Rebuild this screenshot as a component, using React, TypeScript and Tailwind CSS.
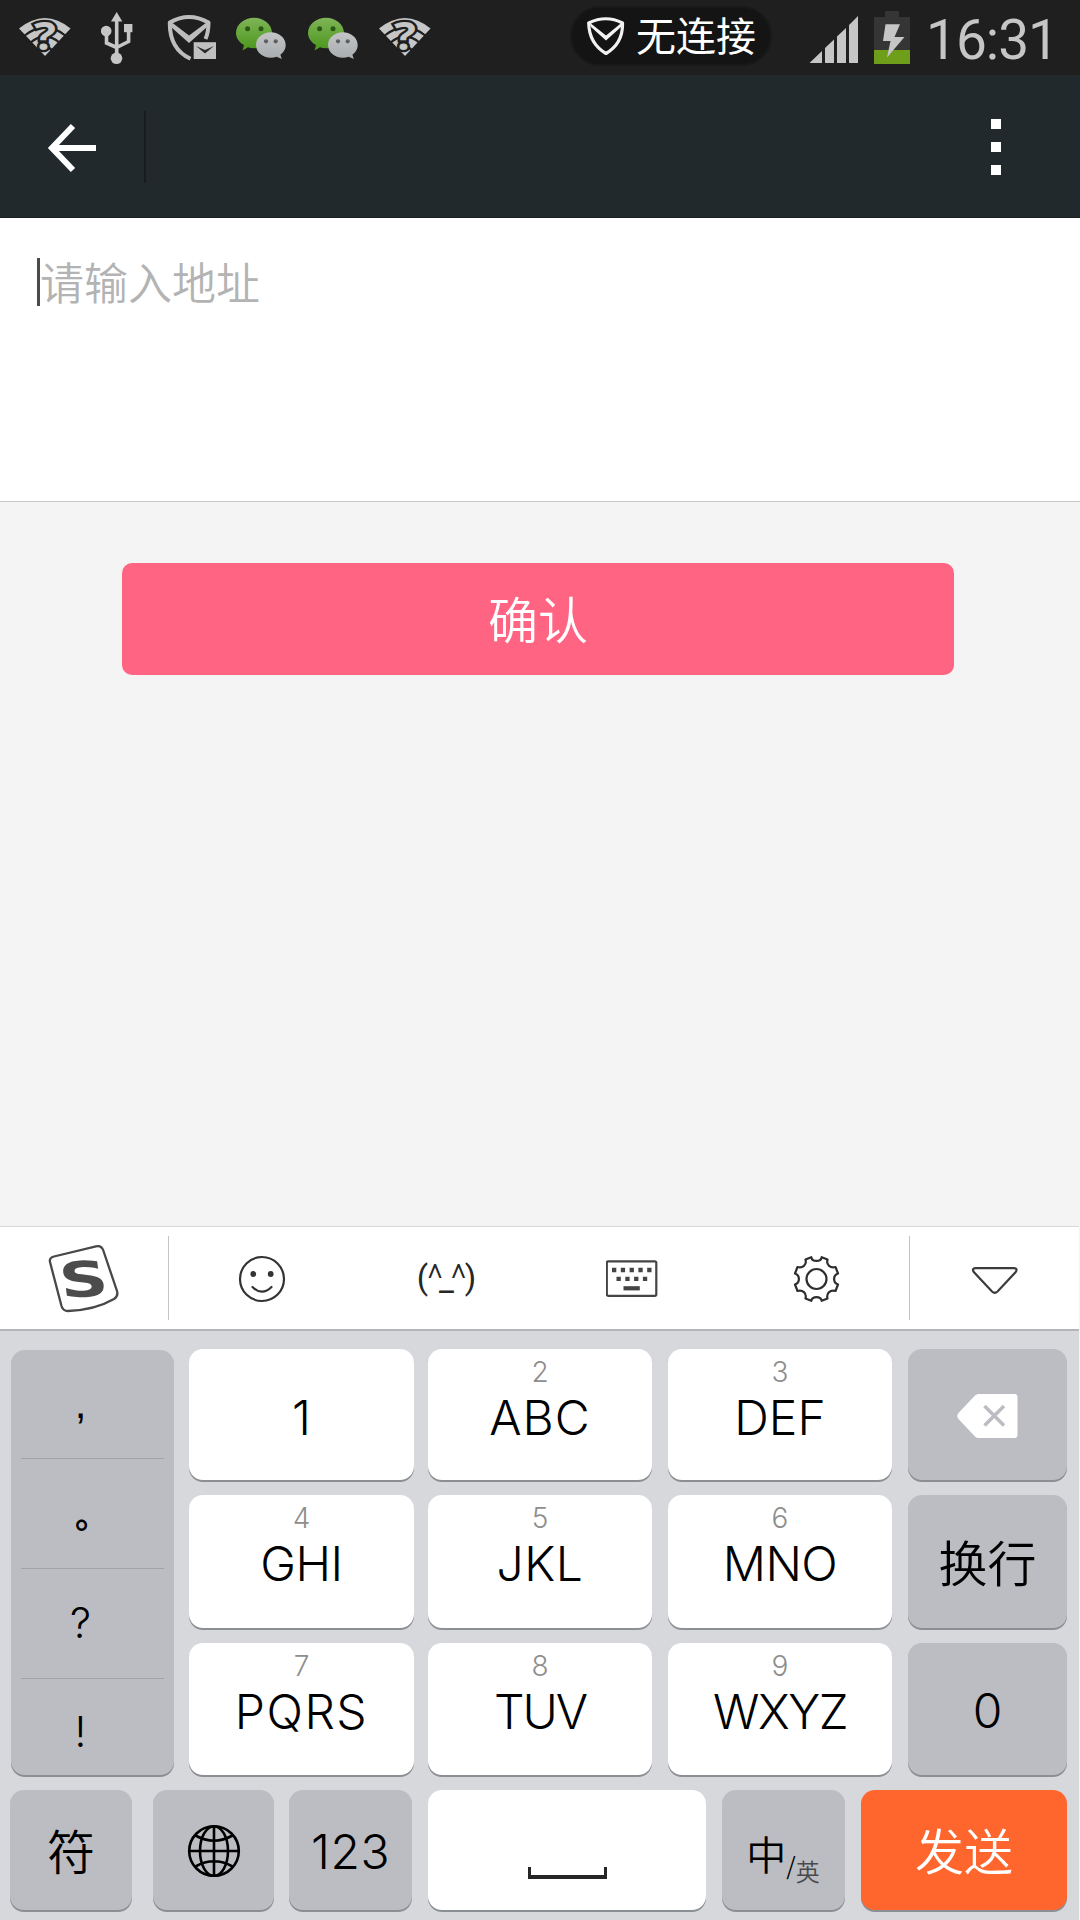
import type { ReactNode } from "react";

const CJK = "font-['Noto_Sans_CJK_SC',sans-serif]";
const CJK_DEMI = "font-['Noto_Sans_CJK_SC_DemiLight','Noto_Sans_CJK_SC',sans-serif] font-[350]";

function WifiUnknown() {
  return (
    <svg width="54" height="75" viewBox="18 0 54 75" className="shrink-0">
      <path d="M45 56 L19 28.5 Q45 7.5 70.5 28.5 Z" fill="#c6c6c6" />
      <g fill="none" stroke="#1f1f1f" strokeWidth="2.2">
        <path d="M24 36 Q45 19 66 36" />
        <path d="M30 43 Q45 30 60 43" />
        <path d="M37 51 Q45 43 53 51" />
      </g>
      <text
        transform="translate(45 50) scale(1.18 1)"
        textAnchor="middle"
        fontSize="39"
        className="font-['Open_Sans',sans-serif] font-bold"
        fill="#c6c6c6"
        stroke="#1f1f1f"
        strokeWidth="4.5"
        paintOrder="stroke"
      >
        ?
      </text>
    </svg>
  );
}

function Usb() {
  return (
    <svg width="32" height="54" viewBox="101 11 32 54" className="shrink-0">
      <g fill="#c6c6c6">
        <path d="M116.7 12 L122.3 21.5 H111 Z" />
        <circle cx="116.5" cy="58.3" r="5.8" />
        <circle cx="106.2" cy="31" r="5.3" />
        <rect x="124" y="24" width="8.4" height="8.2" />
      </g>
      <path
        d="M116.7 20 V55 M106.5 32 V43 L116.7 47.5 M128.6 31 V41.5 L116.7 47.5"
        fill="none"
        stroke="#c6c6c6"
        strokeWidth="3.6"
      />
    </svg>
  );
}

function ShieldMail() {
  return (
    <svg width="50" height="48" viewBox="167 14 50 48" className="shrink-0">
      <g fill="none" stroke="#bdbdbd" strokeLinejoin="round">
        <path strokeWidth="4" d="M190.5 58.8 C178 53 169.5 42 169.8 22.5 Q189 11.5 208.5 22.5 Q208.5 32 205.5 39" />
      </g>
      <path d="M170 21 L189 35.500 L208.500 21 L207 27 L189 43 L171 27 Z" fill="#bdbdbd" />
      <rect x="193.7" y="42.2" width="22.3" height="16.8" fill="#c0c0c0" />
      <path d="M196 46 L205 50 L214 46 L205 53.5 Z" fill="#2a2a2a" />
    </svg>
  );
}

function WeChat({ id }: { id: string }) {
  return (
    <svg width="52" height="44" viewBox="235 17 52 44" className="shrink-0">
      <defs>
        <linearGradient id={id + "g"} x1="0" y1="0" x2="0" y2="1">
          <stop offset="0" stopColor="#7fb558" />
          <stop offset="1" stopColor="#4b961c" />
        </linearGradient>
        <linearGradient id={id + "w"} x1="0" y1="0" x2="0" y2="1">
          <stop offset="0" stopColor="#c3c4c5" />
          <stop offset="1" stopColor="#a9adb0" />
        </linearGradient>
      </defs>
      <path
        d="M254 17.7 C264 17.7 272 24.6 272 33 C272 41.5 264 48.2 254 48.2 Q250.500 48.200 248 47.200 L242.600 50.500 L244 45 C239 42.200 236 38 236 33 C236 24.600 244 17.700 254 17.700 Z"
        fill={`url(#${id}g)`}
      />
      <path
        d="M270.800 32.300 C279 32.300 285.700 38 285.700 45 C285.700 49 283.700 52.400 280.400 54.700 L281.800 59 L276.700 56.800 Q274 57.800 270.800 57.800 C262.600 57.800 256 52 256 45 C256 38 262.600 32.300 270.800 32.300 Z"
        fill={`url(#${id}w)`}
      />
      <g fill="#2b5a14">
        <circle cx="247.600" cy="28.700" r="2.500" />
        <circle cx="261" cy="28.700" r="2.500" />
      </g>
      <g fill="#5c6064">
        <circle cx="266" cy="41.300" r="2.100" />
        <circle cx="275.700" cy="41.300" r="2.100" />
      </g>
    </svg>
  );
}

function StatusBar() {
  return (
    <div className="flex h-[75px] shrink-0 bg-[#1f1f1f]">
      <div className="flex items-start pl-[18px]">
        <WifiUnknown />
        <div className="mt-[11px] ml-[29px]"><Usb /></div>
        <div className="mt-[14px] ml-[34px]"><ShieldMail /></div>
        <div className="mt-[17px] ml-[18px]"><WeChat id="a" /></div>
        <div className="mt-[17px] ml-5"><WeChat id="b" /></div>
        <div className="ml-[19px]"><WifiUnknown /></div>
      </div>
      <div className="mt-[6px] ml-[138px] flex h-[60px] w-[202px] items-center rounded-full border-2 border-[#191919] bg-[#141414] pl-[14px]">
        <svg width="40" height="40" viewBox="586 14 40 40" className="shrink-0">
          <path
            d="M606 51.500 C595 45 589 36 588.700 21 Q606 12.500 622.500 21 C623 36 617 45 606 51.500 Z"
            fill="none"
            stroke="#f2f2f2"
            strokeWidth="3.200"
            strokeLinejoin="round"
          />
          <path d="M589 20 L606 33.500 L622.500 20 L621 25 L606 38.500 L591 25 Z" fill="#f2f2f2" />
        </svg>
        <span className={`${CJK} ml-[10px] -mt-[4px] text-[40px] leading-[40px] whitespace-nowrap text-white`}>无连接</span>
      </div>
      <svg width="50" height="48" viewBox="809 16 50 48" className="mt-4 ml-[37px] shrink-0">
        <path
          d="M809.500 63 L822 51 V63 Z M825 63 V48 L834 39.500 V63 Z M837 63 V36.500 L846 28 V63 Z M849 63 V25 L858 16 V63 Z"
          fill="#c6c6c6"
        />
      </svg>
      <svg width="36" height="54" viewBox="874 11 36 54" className="mt-[11px] ml-[15px] shrink-0">
        <path d="M885 11 H899 V17 H910 V50 H874 V17 H885 Z" fill="#353535" />
        <rect x="874" y="50" width="36" height="14" fill="#6f9f1a" />
        <path d="M885.500 24.300 H900 L894.500 37 H904.500 L887 57.500 L890.500 41 H883 Z" fill="#c6c6c6" />
      </svg>
      <span className="mt-[13px] ml-[16px] font-['Roboto',sans-serif] text-[55px] leading-[55px] tracking-[-1px] text-[#c6c6c6]">16:31</span>
    </div>
  );
}

function Header() {
  return (
    <div className="flex h-[143px] shrink-0 items-start border-b border-[#1b2022] bg-[#22292c]">
      <svg width="50" height="50" viewBox="47 123 50 50" className="mt-12 ml-[47px] shrink-0">
        <path d="M73 126 L52 148 L73 170 M53 148 H96" fill="none" stroke="#fff" strokeWidth="6" />
      </svg>
      <div className="mt-9 ml-[47px] h-[72px] w-[2px] bg-[#171c1e]" />
      <div className="mt-11 mr-[79px] ml-auto flex flex-col gap-[13px]">
        <div className="size-[10px] bg-white" />
        <div className="size-[10px] bg-white" />
        <div className="size-[10px] bg-white" />
      </div>
    </div>
  );
}

function Toolbar() {
  return (
    <div className="flex h-[103px] w-[1079px] shrink-0 items-center border-t border-[#d8d8d8] bg-white">
      <div className="flex w-[168px] justify-center pt-[2px]">
        <svg width="72" height="72" viewBox="48 1243 72 72">
          <path
            d="M54 1256.500 L96 1246.300 Q101.500 1245 103.300 1250.500 L117 1291 Q118.500 1296 114 1299 Q95 1310 68 1311 Q63 1311 61.500 1306 L50 1262 Q49 1257.800 54 1256.500 Z"
            fill="none"
            stroke="#484848"
            strokeWidth="2.300"
          />
          <text
            transform="translate(86 1296.500) skewY(-3) skewX(8) scale(1.360 1)"
            textAnchor="middle"
            fontSize="49"
            className="font-['DejaVu_Sans',sans-serif] font-bold"
            fill="#4c4c4c"
          >
            S
          </text>
        </svg>
      </div>
      <div className="h-[84px] w-px bg-[#c4c4c4]" />
      <div className="flex flex-1 items-center pt-[2px]">
        <div className="flex flex-1 justify-center">
          <svg width="48" height="48" viewBox="-24 -24 48 48">
            <circle r="22" fill="none" stroke="#333" strokeWidth="2.200" />
            <circle cx="-8.700" cy="-5" r="2.900" fill="#333" />
            <circle cx="8.700" cy="-5" r="2.900" fill="#333" />
            <path d="M-9.500 8 Q0 17.500 9.500 8" fill="none" stroke="#333" strokeWidth="2.200" strokeLinecap="round" />
          </svg>
        </div>
        <div className="flex flex-1 justify-center">
          <svg width="62" height="54" viewBox="416 1252 62 54">
            <text textAnchor="middle" className="font-['Roboto',sans-serif]" fill="#262626">
              <tspan x="422.500" y="1288.500" fontSize="33">(</tspan>
              <tspan x="435" y="1292" fontSize="39" className="font-light">^</tspan>
              <tspan x="446.500" y="1290.500" fontSize="33">_</tspan>
              <tspan x="458.500" y="1292" fontSize="39" className="font-light">^</tspan>
              <tspan x="470.500" y="1288.500" fontSize="33">)</tspan>
            </text>
          </svg>
        </div>
        <div className="flex flex-1 justify-center">
          <svg width="52" height="38" viewBox="605.500 1260 52 38">
            <rect x="606.300" y="1261.300" width="49.500" height="34.500" rx="1.500" fill="none" stroke="#444" strokeWidth="2.200" />
            <path
              d="M611.500 1270 H651 M616 1278.800 H647.500"
              stroke="#444"
              strokeWidth="4.300"
              strokeDasharray="4.300 4.500"
            />
            <rect x="623" y="1286.200" width="16.300" height="4.200" fill="#444" />
          </svg>
        </div>
        <div className="flex flex-1 justify-center">
          <svg width="48" height="48" viewBox="-23.500 -24 48 48">
            <circle r="10" fill="none" stroke="#2e2e2e" strokeWidth="2.200" />
            <path
              d="M-5.200 -21.800 C-4.200 -16.800 4.200 -16.800 5.200 -21.800 L11 -19.400 C9.500 -14 14 -10.500 19 -12 L21.500 -5.500 C16.300 -3.800 16.300 3.800 21.500 5.500 L19 12 C14 10.500 9.500 14 11 19.400 L5.200 21.800 C4.200 16.800 -4.200 16.800 -5.200 21.800 L-11 19.400 C-9.500 14 -14 10.500 -19 12 L-21.500 5.500 C-16.300 3.800 -16.300 -3.800 -21.500 -5.500 L-19 -12 C-14 -10.500 -9.500 -14 -11 -19.400 Z"
              fill="none"
              stroke="#2e2e2e"
              strokeWidth="2.200"
              strokeLinejoin="round"
            />
          </svg>
        </div>
      </div>
      <div className="h-[84px] w-px bg-[#c4c4c4]" />
      <div className="flex w-[169px] justify-center pt-[3px]">
        <svg width="50" height="32" viewBox="970 1264 50 32">
          <path
            d="M975.500 1268.200 H1014 Q1018 1268.500 1015.700 1272 L997.500 1291.500 Q994.800 1294 992 1291.500 L973.800 1272 Q971.500 1268.500 975.500 1268.200 Z"
            fill="none"
            stroke="#3c3c3c"
            strokeWidth="2.200"
          />
        </svg>
      </div>
    </div>
  );
}

const keyBase = "flex shrink-0 flex-col items-center rounded-[14px] shadow-[0_2px_0_#8b8e92]";
const latin = "font-['Inter',sans-serif] font-light";

function LetterKey({
  digit,
  label,
  className,
  tracking = "tracking-normal",
}: {
  digit: string;
  label: string;
  className: string;
  tracking?: string;
}) {
  return (
    <div className={`${keyBase} bg-white pt-[9px] ${className}`}>
      <span className={`${latin} h-7 text-[28px] leading-7 text-[#8e8e8e]`}>{digit}</span>
      <span className={`${latin} mt-[8px] text-[48px] leading-[48px] text-black ${tracking}`}>{label}</span>
    </div>
  );
}

function GreyKey({ className, children }: { className: string; children: ReactNode }) {
  return <div className={`${keyBase} justify-center bg-[#bcbdc2] ${className}`}>{children}</div>;
}

function Keypad() {
  return (
    <div className="flex w-[1079px] flex-1 flex-col border-t-2 border-[#b4b5b9] bg-[#d7d8dc]">
      <div className="mt-[18px] flex h-[426px] pl-[11px]">
        <div className={`${keyBase} mt-px w-[163px] bg-[#bcbdc2] px-[10px] ${latin} text-[42px] leading-[42px] text-black`}>
          <div className="flex h-[109px] w-full shrink-0 border-b border-[#a2a3a7] pt-[33px]">
            <span className="w-[119px] text-center font-['Liberation_Sans',sans-serif] font-normal">,</span>
          </div>
          <div className="flex h-[110px] w-full shrink-0 border-b border-[#a2a3a7] pt-[48px] pl-[54px]">
            <span className={`${CJK} h-[14px] text-[34px] leading-[14px] font-bold`}>。</span>
          </div>
          <div className="flex h-[110px] w-full shrink-0 border-b border-[#a2a3a7] pt-[33px]"><span className="w-[119px] text-center">?</span></div>
          <div className="flex w-full pt-[32px]"><span className="w-[119px] text-center">!</span></div>
        </div>
        <div className="ml-[15px] flex flex-col">
          <div className="flex">
            <LetterKey digit="" label="1" className="h-[131px] w-[225px]" />
            <LetterKey digit="2" label="ABC" className="ml-[14px] h-[131px] w-[224px]" tracking="tracking-[1px]" />
            <LetterKey digit="3" label="DEF" className="ml-4 h-[131px] w-[224px]" />
            <GreyKey className="ml-4 h-[131px] w-[159px]">
              <svg width="61" height="46" viewBox="957.500 1392 61 46">
                <path
                  d="M979 1394 H1015 Q1018 1394 1018 1397 V1435 Q1018 1438 1015 1438 H979 Q977 1438 975.500 1436.500 L959 1419 Q956.500 1416 959 1413 L975.500 1395.500 Q977 1394 979 1394 Z"
                  fill="#fff"
                />
                <path d="M985 1406 L1004.500 1425.500 M1004.500 1406 L985 1425.500" stroke="#bcbdc2" strokeWidth="3.500" />
              </svg>
            </GreyKey>
          </div>
          <div className="mt-[15px] flex">
            <LetterKey digit="4" label="GHI" className="h-[133px] w-[225px]" tracking="tracking-[-0.5px]" />
            <LetterKey digit="5" label="JKL" className="ml-[14px] h-[133px] w-[224px]" tracking="tracking-[0.5px]" />
            <LetterKey digit="6" label="MNO" className="ml-4 h-[133px] w-[224px]" tracking="tracking-[-0.5px]" />
            <GreyKey className="ml-4 h-[133px] w-[159px]">
              <span className={`${CJK_DEMI} -mt-[2px] text-[49px] leading-[49px]`}>换行</span>
            </GreyKey>
          </div>
          <div className="mt-[15px] flex">
            <LetterKey digit="7" label="PQRS" className="h-[132px] w-[225px]" tracking="tracking-[1.5px]" />
            <LetterKey digit="8" label="TUV" className="ml-[14px] h-[132px] w-[224px]" tracking="tracking-[-2px]" />
            <LetterKey digit="9" label="WXYZ" className="ml-4 h-[132px] w-[224px]" tracking="tracking-[-1.5px]" />
            <GreyKey className="ml-4 h-[132px] w-[159px]">
              <span className={`${latin} mt-[4px] text-[48px] leading-[48px]`}>0</span>
            </GreyKey>
          </div>
        </div>
      </div>
      <div className="mt-[15px] flex pl-[10px]">
        <GreyKey className="h-[120px] w-[122px]">
          <span className={`${CJK_DEMI} -mt-[3px] text-[48px] leading-[48px]`}>符</span>
        </GreyKey>
        <GreyKey className="ml-[21px] h-[120px] w-[121px]">
          <svg width="54" height="56" viewBox="-27 -29 54 56" fill="none" stroke="#000" strokeWidth="2.600">
            <circle r="24.800" />
            <ellipse rx="14" ry="24.800" />
            <path d="M0 -25 V25 M-25 0 H25 M-18.500 -15.500 Q0 -5 18.500 -15.500 M-18.500 15.500 Q0 5 18.500 15.500" />
          </svg>
        </GreyKey>
        <GreyKey className="ml-[15px] h-[120px] w-[123px]">
          <span className={`${latin} mt-[4px] text-[48px] leading-[48px] tracking-[0.5px]`}>123</span>
        </GreyKey>
        <div className={`${keyBase} ml-4 h-[120px] w-[278px] bg-white`}>
          <div className="mt-[77px] h-3 w-[79px] border-x-[3px] border-b-4 border-[#262626]" />
        </div>
        <GreyKey className="ml-4 h-[120px] w-[123px]">
          <div className={`${CJK_DEMI} mt-[16px] flex items-start text-black`}>
            <span className="-ml-px text-[40px] leading-[40px]">中</span>
            <span className="mt-[20px] text-[24px] leading-[24px]">/</span>
            <span className="mt-[26px] text-[24px] leading-[24px] text-[#4a4a4c]">英</span>
          </div>
        </GreyKey>
        <div className={`${keyBase} ml-4 h-[120px] w-[206px] justify-center bg-[#ff662e]`}>
          <span className={`${CJK_DEMI} -mt-[3px] text-[49px] leading-[49px] text-white`}>发送</span>
        </div>
      </div>
    </div>
  );
}

export default function App() {
  return (
    <div className="flex h-[1920px] w-[1080px] flex-col overflow-hidden bg-[#f4f4f4]">
      <StatusBar />
      <Header />
      <div className="flex h-[284px] shrink-0 items-start border-b border-[#c8c8c8] bg-white pt-10 pl-[37px]">
        <div className="h-12 w-[3px] bg-[#4a4a4a]" />
        <span className={`${CJK_DEMI} -mt-px text-[44px] leading-[48px] text-[#b3b3b3]`}>请输入地址</span>
      </div>
      <div className="flex h-[724px] shrink-0 flex-col pt-[61px] pl-[122px]">
        <button className={`${CJK_DEMI} h-[112px] w-[832px] rounded-[10px] bg-[#ff6482] pb-[4px] text-[50px] leading-[50px] text-white`}>
          确认
        </button>
      </div>
      <Toolbar />
      <Keypad />
    </div>
  );
}
